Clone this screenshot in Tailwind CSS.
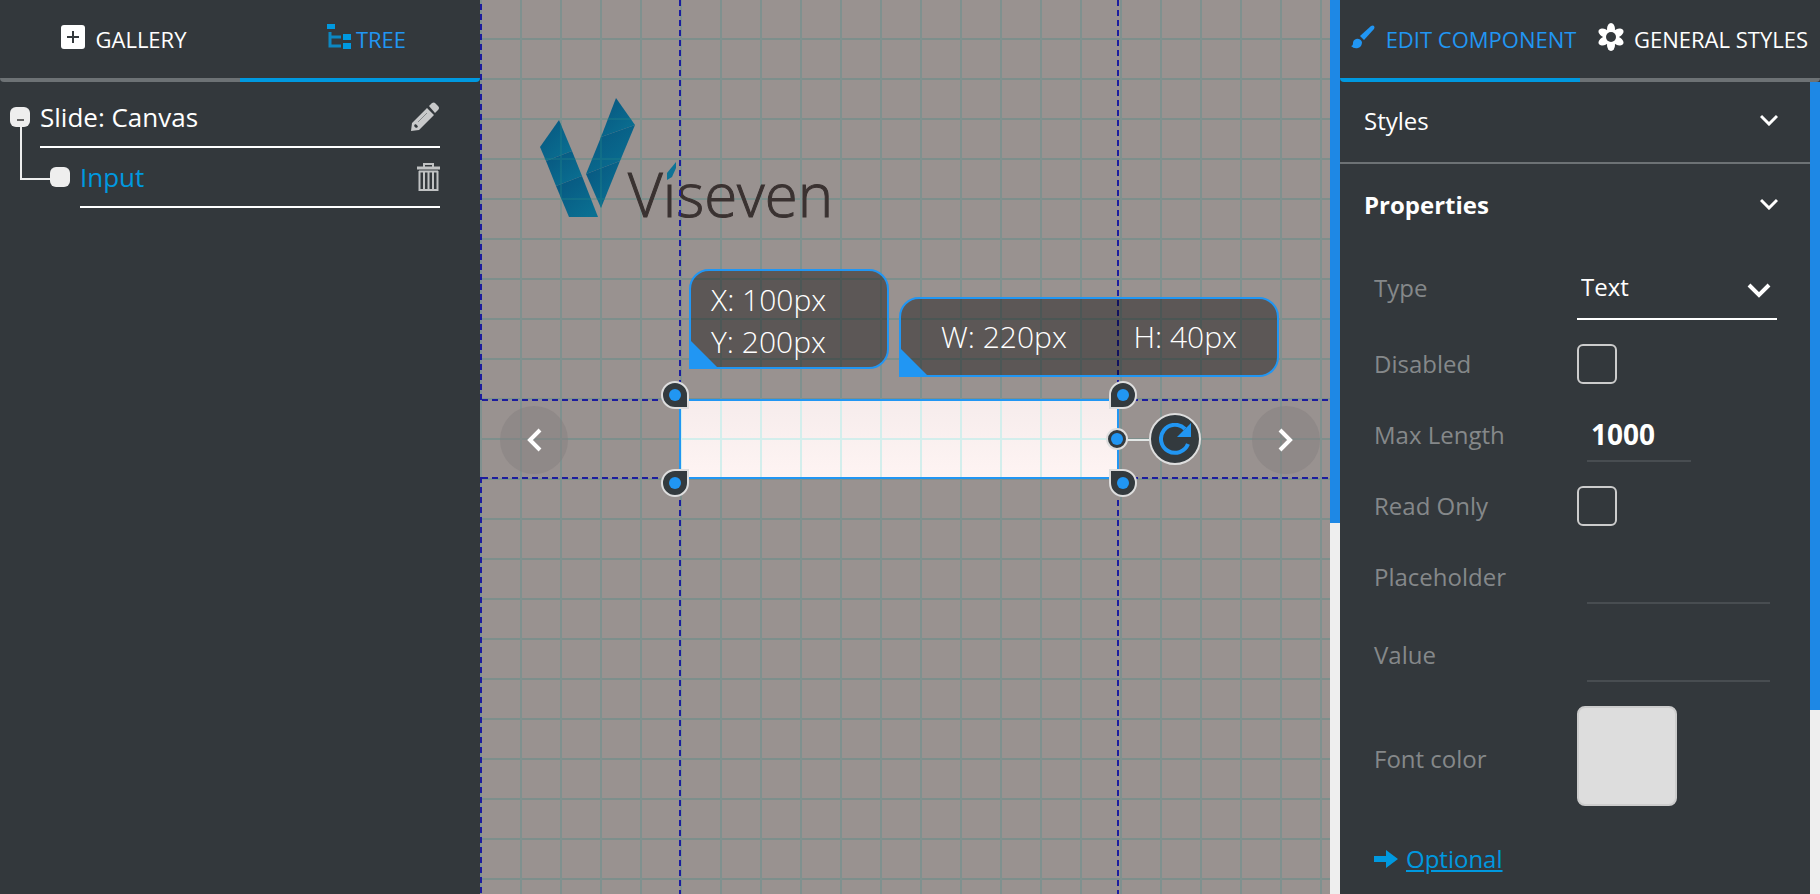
<!DOCTYPE html>
<html lang="en">
<head>
    <meta charset="UTF-8">
    <meta name="viewport" content="width=device-width, initial-scale=1.0">
    <title>Slide editor</title>
    <script src="https://cdn.jsdelivr.net/npm/@tailwindcss/browser@4"></script>
</head>
<body class="h-screen flex overflow-hidden bg-[#33383c] text-white font-['Open_Sans','Noto_Sans',sans-serif]">

    <!-- left panel -->
    <aside class="w-[480px] shrink-0 flex flex-col">
        <nav class="flex h-[82px] rounded-b overflow-hidden text-[22px]">
            <button type="button" class="flex-1 flex items-center justify-center border-b-4 border-[#6d7275]">
                <span class="w-[42px] flex justify-center mb-1 pr-1">
                    <svg class="size-6" viewBox="0 0 24 24"><rect width="24" height="24" rx="3" fill="#fff"/><path d="M12 6v12M6 12h12" stroke="#33383c" stroke-width="2"/></svg>
                </span>
                GALLERY
            </button>
            <button type="button" class="flex-1 flex items-center justify-center border-b-4 border-[#0099e0] text-[#2196f3]">
                <span class="w-[42px] flex justify-end mb-1 pr-1">
                    <svg class="w-[26px] h-[26px]" viewBox="0 0 26 26" fill="#0099e0"><path d="M1 0h8v5H1zM17 10h8v6h-8zM17 19h8v6h-8z"/><path d="M4 8v14h11M4 13h11" fill="none" stroke="#0d87c2" stroke-width="3"/></svg>
                </span>
                TREE
            </button>
        </nav>

        <div class="relative pt-[6px] pr-10 pl-10 text-[26px]">
            <span class="absolute left-5 top-[45px] w-[30px] h-[53px] border-l-2 border-b-2 border-[#eee]"></span>
            <button type="button" aria-label="Collapse" class="absolute left-[10px] top-[25px] size-5 rounded-md bg-[#eee] flex justify-center items-center"><span class="w-[7px] h-[2px] mt-[5px] bg-[#666]"></span></button>
            <span class="absolute left-[50px] top-[85px] size-5 rounded-md bg-[#eee]"></span>
            <div class="h-[60px] flex items-center justify-between border-b-2 border-white">
                <a href="#">Slide: Canvas</a>
                <button type="button" aria-label="Rename">
                    <svg class="w-[30px] h-[30px]" viewBox="0 0 30 30" fill="#c8c9ca"><path d="M19 4l3-3q2-1 3 0l3 3q2 2 0 4l-3 3z"/><path fill-rule="evenodd" d="M17 6l7 7L9 28l-8 1 1-8zM5 22l-1 2 2 2 2-1-1-2z"/><path d="M8 20L17 11" stroke="#85898b" stroke-width="1"/></svg>
                </button>
            </div>
            <div class="h-[60px] ml-10 flex items-center justify-between border-b-2 border-white">
                <a href="#" class="text-[#0099e0]">Input</a>
                <button type="button" aria-label="Delete">
                    <svg class="w-[23px] h-[30px]" viewBox="0 0 23 30" fill="none" stroke="#c0c2c3" stroke-width="2"><path d="M7 5V2h9v3"/><path d="M0 6h23" stroke-width="3"/><path d="M2.500 9v19h18V9M7 9v18M11.500 9v18M16 9v18M2 9.500h19"/></svg>
                </button>
            </div>
        </div>
    </aside>

    <!-- canvas -->
    <main class="relative flex-1 overflow-hidden bg-[#999290] bg-[linear-gradient(90deg,#7f918f_2px,transparent_2px),linear-gradient(#7d8f8c_2px,transparent_2px)] bg-[size:40px_40px] bg-[position:0_0,0_38px]">
        <svg class="absolute left-[60px] top-[98px] w-[300px] h-[150px]" viewBox="0 0 300 150">
            <defs>
                <linearGradient id="leaf" x1="0" y1="0" x2=".8" y2="1"><stop offset="0" stop-color="#07557f"/><stop offset="1" stop-color="#0a7092"/></linearGradient>
                <clipPath id="leaves"><path d="M19 22L0 49l29 70h29zM76 0l19 27-34 83-15-34z"/></clipPath>
            </defs>
            <path d="M19 22l13 31L6 63 0 49z" fill="url(#leaf)"/>
            <path d="M6 63l26-10 10 25-26 10z" fill="url(#leaf)"/>
            <path d="M16 88l26-10 16 41H29z" fill="url(#leaf)"/>
            <path d="M76 0l19 27-34 12z" fill="url(#leaf)"/>
            <path d="M61 39l34-12-15 36-34 13z" fill="url(#leaf)"/>
            <path d="M46 76l34-13-19 47z" fill="url(#leaf)"/>
            <path d="M127 82v-7l9-11v6l-4 9-5 3z" fill="#0d7396"/>
            <text x="88" y="119" font-size="60" font-weight="300" fill="#3a3231" stroke="#3a3231" stroke-width="1">Vıseven</text>
            <path clip-path="url(#leaves)" d="M0 21h100M0 61h100M0 101h100M21 0v132M61 0v132" stroke="#1f8087" stroke-opacity=".4" stroke-width="2" fill="none"/>
        </svg>

        <!-- guides -->
        <div class="absolute left-0 top-0 w-[2px] h-[401px] bg-[repeating-linear-gradient(transparent_0_4px,#1c1c9e_4px_10px)]"></div>
        <div class="absolute left-0 top-[477px] bottom-0 w-[2px] bg-[repeating-linear-gradient(#1c1c9e_0_6px,transparent_6px_10px)]"></div>
        <div class="absolute left-[199px] top-0 bottom-0 w-[2px] bg-[repeating-linear-gradient(#1c1c9e_0_6px,transparent_6px_10px)]"></div>
        <div class="absolute left-[637px] top-0 bottom-0 w-[2px] bg-[repeating-linear-gradient(#1c1c9e_0_6px,transparent_6px_10px)]"></div>
        <div class="absolute left-[2px] right-0 top-[399px] h-[2px] bg-[repeating-linear-gradient(90deg,#1c1c9e_0_6px,transparent_6px_10px)]"></div>
        <div class="absolute left-[2px] right-0 top-[477px] h-[2px] bg-[repeating-linear-gradient(90deg,#1c1c9e_0_6px,transparent_6px_10px)]"></div>

        <!-- previous / next slide -->
        <button type="button" aria-label="Previous slide" class="absolute left-5 top-[406px] size-[68px] rounded-full bg-[#857f80]/50 flex items-center justify-center">
            <svg class="w-4 h-6" viewBox="0 0 16 24" fill="none" stroke="#fff" stroke-width="4"><path d="M14 2L4 12l10 10"/></svg>
        </button>
        <button type="button" aria-label="Next slide" class="absolute right-[10px] top-[406px] size-[68px] rounded-full bg-[#857f80]/50 flex items-center justify-center">
            <svg class="w-4 h-6" viewBox="0 0 16 24" fill="none" stroke="#fff" stroke-width="4"><path d="M2 2l10 10L2 22"/></svg>
        </button>

        <!-- selected component -->
        <div class="absolute left-[199px] top-[399px] w-[440px] h-20 border-2 border-[#2196f3] bg-[linear-gradient(90deg,#d3eeec_2px,transparent_2px),linear-gradient(#d3eeec_2px,transparent_2px),linear-gradient(#f6ecec,#fef4f3)] bg-[size:40px_40px,40px_40px,100%_100%] bg-[position:39px_0,0_37px,0_0]"></div>
        <span class="absolute left-[181px] top-[381px] size-7 rounded-full rounded-br-none border-2 border-[#dedede] bg-[#333a3e] flex items-center justify-center"><span class="size-3 rounded-full bg-[#2196f3]"></span></span>
        <span class="absolute left-[629px] top-[381px] size-7 rounded-full rounded-bl-none border-2 border-[#dedede] bg-[#333a3e] flex items-center justify-center"><span class="size-3 rounded-full bg-[#2196f3]"></span></span>
        <span class="absolute left-[181px] top-[469px] size-7 rounded-full rounded-tr-none border-2 border-[#dedede] bg-[#333a3e] flex items-center justify-center"><span class="size-3 rounded-full bg-[#2196f3]"></span></span>
        <span class="absolute left-[629px] top-[469px] size-7 rounded-full rounded-tl-none border-2 border-[#dedede] bg-[#333a3e] flex items-center justify-center"><span class="size-3 rounded-full bg-[#2196f3]"></span></span>
        <span class="absolute left-[646px] top-[439px] w-6 h-[2px] bg-[#e2e6e5]"></span>
        <span class="absolute left-[626px] top-[428px] size-[22px] rounded-full border-2 border-[#dedede] bg-[#333a3e] flex items-center justify-center"><span class="size-3 rounded-full bg-[#2196f3]"></span></span>
        <button type="button" aria-label="Rotate" class="absolute left-[669px] top-[413px] size-[52px] rounded-full border-2 border-[#dedede] bg-[#333a3e] flex items-center justify-center">
            <svg class="size-8" viewBox="0 0 32 32"><path d="M29 21A14 14 0 1 1 26 6" fill="none" stroke="#2196f3" stroke-width="4"/><path d="M32 0v14H18z" fill="#2196f3"/></svg>
        </button>

        <!-- position and size tooltips -->
        <div class="absolute left-[209px] top-[269px] w-[200px] h-[100px] rounded-[20px] rounded-bl-none border-2 border-[#2196f3] bg-black/40 pt-2 pl-5 text-[30px] leading-[42px] font-light">
            <p>X: 100px</p>
            <p>Y: 200px</p>
            <svg class="absolute left-0 bottom-0 w-[26px] h-[26px]" viewBox="0 0 26 26"><path d="M0 0l26 26H0z" fill="#2196f3"/></svg>
        </div>
        <div class="absolute left-[419px] top-[297px] w-[380px] h-20 rounded-[20px] rounded-bl-none border-2 border-[#2196f3] bg-black/40 px-10 flex items-center justify-between text-[30px] leading-[42px] font-light">
            <p>W: 220px</p>
            <p>H: 40px</p>
            <svg class="absolute left-0 bottom-0 w-[26px] h-[26px]" viewBox="0 0 26 26"><path d="M0 0l26 26H0z" fill="#2196f3"/></svg>
        </div>
    </main>

    <!-- canvas scrollbar -->
    <div class="w-[10px] shrink-0 bg-[#eee]"><div class="h-[523px] bg-[#1e88e5]"></div></div>

    <!-- right panel -->
    <aside class="w-[480px] shrink-0 flex flex-col">
        <nav class="flex h-[82px] shrink-0 rounded-b overflow-hidden text-[22px] whitespace-nowrap">
            <button type="button" class="w-1/2 flex items-center justify-center border-b-4 border-[#0099e0] text-[#2196f3]">
                <span class="w-[42px] flex justify-center mb-1 pr-1">
                    <svg class="size-6" viewBox="0 0 24 24" fill="#2196f3"><path d="M20 1q2-1 3 0t0 3L13 15l-4-4z"/><path d="M5 14q4-1 6 3-0 5-4 6-4 1-7-2 2 0 2-3 0-3 3-4z"/></svg>
                </span>
                EDIT COMPONENT
            </button>
            <button type="button" class="w-1/2 flex items-center justify-center border-b-4 border-[#6d7275]">
                <span class="w-[42px] flex justify-center mb-1 pr-1">
                    <svg class="w-[28px] h-[28px]" viewBox="-14 -14 28 28"><g fill="#fff"><ellipse cy="-8" rx="4" ry="6"/><ellipse cy="-8" rx="4" ry="6" transform="rotate(60)"/><ellipse cy="-8" rx="4" ry="6" transform="rotate(120)"/><ellipse cy="-8" rx="4" ry="6" transform="rotate(180)"/><ellipse cy="-8" rx="4" ry="6" transform="rotate(240)"/><ellipse cy="-8" rx="4" ry="6" transform="rotate(300)"/><circle r="8"/></g><circle r="5" fill="#33383c"/></svg>
                </span>
                GENERAL STYLES
            </button>
        </nav>

        <div class="flex flex-1 min-h-0">
            <div class="flex-1 overflow-hidden text-2xl">
                <button type="button" class="w-full h-[82px] pl-6 pr-8 pb-[2px] flex items-center justify-between border-b-2 border-[#6d7275]">
                    Styles
                    <svg class="w-[18px] h-3 mb-[2px]" viewBox="0 0 18 12" fill="none" stroke="#fff" stroke-width="3"><path d="M1 2l8 8 8-8"/></svg>
                </button>
                <button type="button" class="w-full h-[84px] pl-6 pr-8 pb-[2px] flex items-center justify-between font-bold">
                    Properties
                    <svg class="w-[18px] h-3 mb-[2px]" viewBox="0 0 18 12" fill="none" stroke="#fff" stroke-width="3"><path d="M1 2l8 8 8-8"/></svg>
                </button>

                <form class="pl-[34px] pr-[33px]">
                    <div class="h-20 flex items-center">
                        <label for="type" class="w-[203px] text-[#85888a]">Type</label>
                        <div class="relative flex-1">
                            <select id="type" class="appearance-none w-full h-16 pl-1 border-b-2 border-white">
                                <option>Text</option>
                            </select>
                            <svg class="absolute right-[6px] top-[27px] w-[24px] h-[16px] pointer-events-none" viewBox="0 0 24 16" fill="none" stroke="#fff" stroke-width="4"><path d="M2 2l10 10L22 2"/></svg>
                        </div>
                    </div>
                    <div class="h-[72px] flex items-center">
                        <label for="disabled" class="w-[203px] text-[#85888a]">Disabled</label>
                        <input id="disabled" type="checkbox" class="appearance-none size-10 rounded-md border-2 border-[#ccc]">
                    </div>
                    <div class="h-[70px] flex items-center">
                        <label for="maxlength" class="w-[203px] text-[#85888a]">Max Length</label>
                        <input id="maxlength" type="text" value="1000" class="ml-[10px] w-[104px] h-[54px] px-1 border-b-2 border-[#484d51] text-[28px] font-bold">
                    </div>
                    <div class="h-[72px] flex items-center">
                        <label for="readonly" class="w-[203px] text-[#85888a]">Read Only</label>
                        <input id="readonly" type="checkbox" class="appearance-none size-10 rounded-md border-2 border-[#ccc]">
                    </div>
                    <div class="h-[70px] flex items-center">
                        <label for="placeholder" class="w-[203px] text-[#85888a]">Placeholder</label>
                        <input id="placeholder" type="text" class="ml-[10px] mr-[7px] flex-1 min-w-0 h-[54px] px-1 border-b-2 border-[#484d51] text-[28px] font-bold">
                    </div>
                    <div class="h-[86px] flex items-center">
                        <label for="value" class="w-[203px] text-[#85888a]">Value</label>
                        <input id="value" type="text" class="ml-[10px] mr-[7px] flex-1 min-w-0 h-[54px] px-1 border-b-2 border-[#484d51] text-[28px] font-bold">
                    </div>
                    <div class="h-[116px] flex items-center">
                        <label for="color" class="w-[203px] pt-[6px] text-[#85888a]">Font color</label>
                        <button id="color" type="button" class="size-[100px] rounded-lg border-2 border-[#ccc] bg-[#ddd]"></button>
                    </div>
                    <div class="h-[90px] flex items-center gap-2 text-[#0099e0]">
                        <svg class="w-6 h-[18px]" viewBox="0 0 24 18" fill="#0099e0"><path d="M0 6h12V0l12 9-12 9v-6H0z"/></svg>
                        <a href="#" class="underline">Optional</a>
                    </div>
                </form>
            </div>
            <div class="w-[10px] bg-[#eee]"><div class="h-[628px] bg-[#1e88e5]"></div></div>
        </div>
    </aside>

</body>
</html>
